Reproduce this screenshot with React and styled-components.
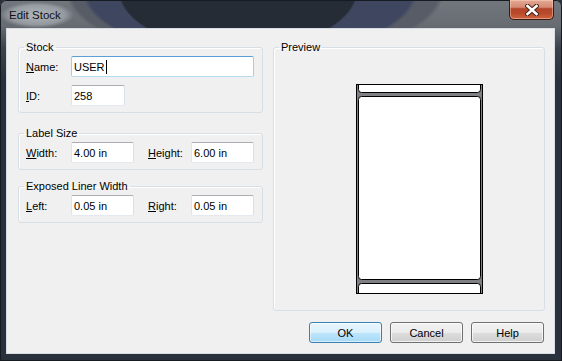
import React from 'react';
import styled, { createGlobalStyle } from 'styled-components';

const GlobalStyle = createGlobalStyle`
  html, body {
    margin: 0;
    padding: 0;
    background: #28313b;
  }
  body {
    font-family: "Liberation Sans", Arial, sans-serif;
    font-size: 11px;
    color: #000;
  }
`;

const Window = styled.div`
  width: 562px;
  height: 361px;
  box-sizing: border-box;
  display: flex;
  flex-direction: column;
  border-radius: 6px 6px 0 0;
  overflow: hidden;
  box-shadow: inset 0 0 0 1px #161b21;
  background:
    radial-gradient(120px 60px at 238px -10px, #262c36 98%, rgba(38, 44, 54, 0) 100%),
    radial-gradient(168px 68px at 250px -10px, #3f4660 97%, rgba(63, 70, 96, 0) 100%),
    radial-gradient(190px 72px at 255px -10px, #575c66 97%, rgba(87, 92, 102, 0) 100%),
    linear-gradient(to bottom, #72777e 0, #676c73 26px, #3a424c 48px, #29323c 80px, #29323c 100%);
`;

const TitleBar = styled.div`
  height: 28px;
  flex: none;
  display: flex;
  justify-content: space-between;
  align-items: flex-start;
`;

const Title = styled.span`
  margin-top: 2px;
  padding: 6px 13px 6px 9px;
  font-size: 11.5px;
  line-height: 14px;
  color: #111;
  background: radial-gradient(ellipse closest-side, rgba(190, 195, 201, 0.85), rgba(190, 195, 201, 0.5) 75%, rgba(190, 195, 201, 0));
`;

const CloseButton = styled.div`
  width: 45px;
  height: 20px;
  box-sizing: border-box;
  margin-right: 8px;
  display: flex;
  align-items: center;
  justify-content: center;
  border: 1px solid #3a1a12;
  border-top: none;
  border-radius: 0 0 5px 5px;
  background: linear-gradient(to bottom, #e4a895 0, #d58a73 38%, #b2452a 46%, #b9492b 70%, #d0643f 100%);
  box-shadow: inset 0 0 0 1px rgba(255, 220, 200, 0.45);
`;

const Body = styled.div`
  flex: 1;
  margin: 0 7px 7px 6px;
  border: 1px solid #d8dde4;
  background: #f0f0f0;
  display: grid;
  grid-template-columns: 245px 272px;
  grid-template-rows: 1fr auto;
  column-gap: 10px;
  row-gap: 11px;
  padding: 11px 9px 10px 11px;
`;

const Column = styled.div`
  display: flex;
  flex-direction: column;
`;

const Group = styled.fieldset`
  margin: ${p => p.$top || 0}px 0 0 0;
  padding: 2px 8px 6px 7px;
  border: 1px solid #d5dfe5;
  border-radius: 3px;
  box-shadow: inset 1px 1px 0 #fff;
  min-inline-size: 0;
  display: flex;
  flex-direction: column;
  gap: 8px;
`;

const Legend = styled.legend`
  padding: 0 2px;
  margin-left: -2px;
  line-height: 14px;
  font-size: 11px;
`;

const Row = styled.div`
  display: flex;
  align-items: center;
  height: 21px;
`;

const Label = styled.span`
  width: ${p => p.$w || 45}px;
  flex: none;
`;

const Key = styled.span`
  text-decoration: underline;
  text-underline-offset: 1px;
`;

const Field = styled.div`
  width: ${p => p.$w}px;
  height: 21px;
  box-sizing: border-box;
  flex: none;
  display: flex;
  align-items: center;
  padding: 0 2px;
  background: #fff;
  border: 1px solid;
  border-color: ${p => p.$focus ? '#5b9fd6 #a8cbe6 #b7d9ed #a8cbe6' : '#abadb3 #dbdfe6 #e3e9ef #e2e3ea'};
  border-radius: 2px;
  margin-right: ${p => p.$after || 0}px;
  white-space: nowrap;
`;

const Caret = styled.span`
  display: inline-block;
  width: 1px;
  height: 14px;
  background: #000;
  margin-left: 1px;
`;

const PreviewStage = styled.div`
  padding: 28px 0 0 75px;
`;

const ButtonRow = styled.div`
  grid-column: 1 / 3;
  display: flex;
  justify-content: flex-end;
  gap: 8px;
  padding-right: 1px;
`;

const Button = styled.div`
  width: 73px;
  height: 21px;
  box-sizing: border-box;
  display: flex;
  align-items: center;
  justify-content: center;
  border: 1px solid ${p => p.$default ? '#3c7fb1' : '#707070'};
  border-radius: 3px;
  background: ${p => p.$default
    ? 'linear-gradient(to bottom, #eaf6fd 0, #d9f0fc 50%, #bee6fd 51%, #a7d9f5 100%)'
    : 'linear-gradient(to bottom, #f2f2f2 0, #ebebeb 50%, #dddddd 51%, #cfcfcf 100%)'};
  box-shadow: inset 0 0 0 1px ${p => p.$default ? 'rgba(255,255,255,0.55)' : 'rgba(255,255,255,0.7)'};
`;

const CloseGlyph = () => (
  <svg width="14" height="12" viewBox="0 0 14 12">
    <path d="M2.5 2 L11.5 10 M11.5 2 L2.5 10" stroke="#4a241a" strokeWidth="4.6" strokeLinecap="square" />
    <path d="M2.5 2 L11.5 10 M11.5 2 L2.5 10" stroke="#fff" strokeWidth="2.6" strokeLinecap="square" />
  </svg>
);

const LabelPreview = () => (
  <svg width="127" height="210" viewBox="0 0 127 210">
    <rect x="0" y="0" width="127" height="210" fill="#7f8083" />
    <rect x="2.5" y="-6.5" width="122" height="15" rx="3" fill="#fff" stroke="#000" />
    <rect x="2.5" y="12.5" width="122" height="183" rx="3" fill="#fff" stroke="#000" />
    <rect x="2.5" y="199.5" width="122" height="20" rx="3" fill="#fff" stroke="#000" />
    <rect x="0.5" y="0.5" width="126" height="209" fill="none" stroke="#000" />
  </svg>
);

const App = () => {
  return (
    <>
      <GlobalStyle />
      <Window>
        <TitleBar>
          <Title>Edit Stock</Title>
          <CloseButton>
            <CloseGlyph />
          </CloseButton>
        </TitleBar>
        <Body>
          <Column>
            <Group>
              <Legend>Stock</Legend>
              <Row>
                <Label><Key>N</Key>ame:</Label>
                <Field $w={183} $focus>USER<Caret /></Field>
              </Row>
              <Row>
                <Label><Key>I</Key>D:</Label>
                <Field $w={54}>258</Field>
              </Row>
            </Group>
            <Group $top={13}>
              <Legend>Label Size</Legend>
              <Row>
                <Label><Key>W</Key>idth:</Label>
                <Field $w={63} $after={14}>4.00 in</Field>
                <Label $w={43}><Key>H</Key>eight:</Label>
                <Field $w={63}>6.00 in</Field>
              </Row>
            </Group>
            <Group $top={9}>
              <Legend>Exposed Liner Width</Legend>
              <Row>
                <Label><Key>L</Key>eft:</Label>
                <Field $w={63} $after={14}>0.05 in</Field>
                <Label $w={43}><Key>R</Key>ight:</Label>
                <Field $w={63}>0.05 in</Field>
              </Row>
            </Group>
          </Column>
          <Group>
            <Legend>Preview</Legend>
            <PreviewStage>
              <LabelPreview />
            </PreviewStage>
          </Group>
          <ButtonRow>
            <Button $default>OK</Button>
            <Button>Cancel</Button>
            <Button>Help</Button>
          </ButtonRow>
        </Body>
      </Window>
    </>
  );
};

export default App;
